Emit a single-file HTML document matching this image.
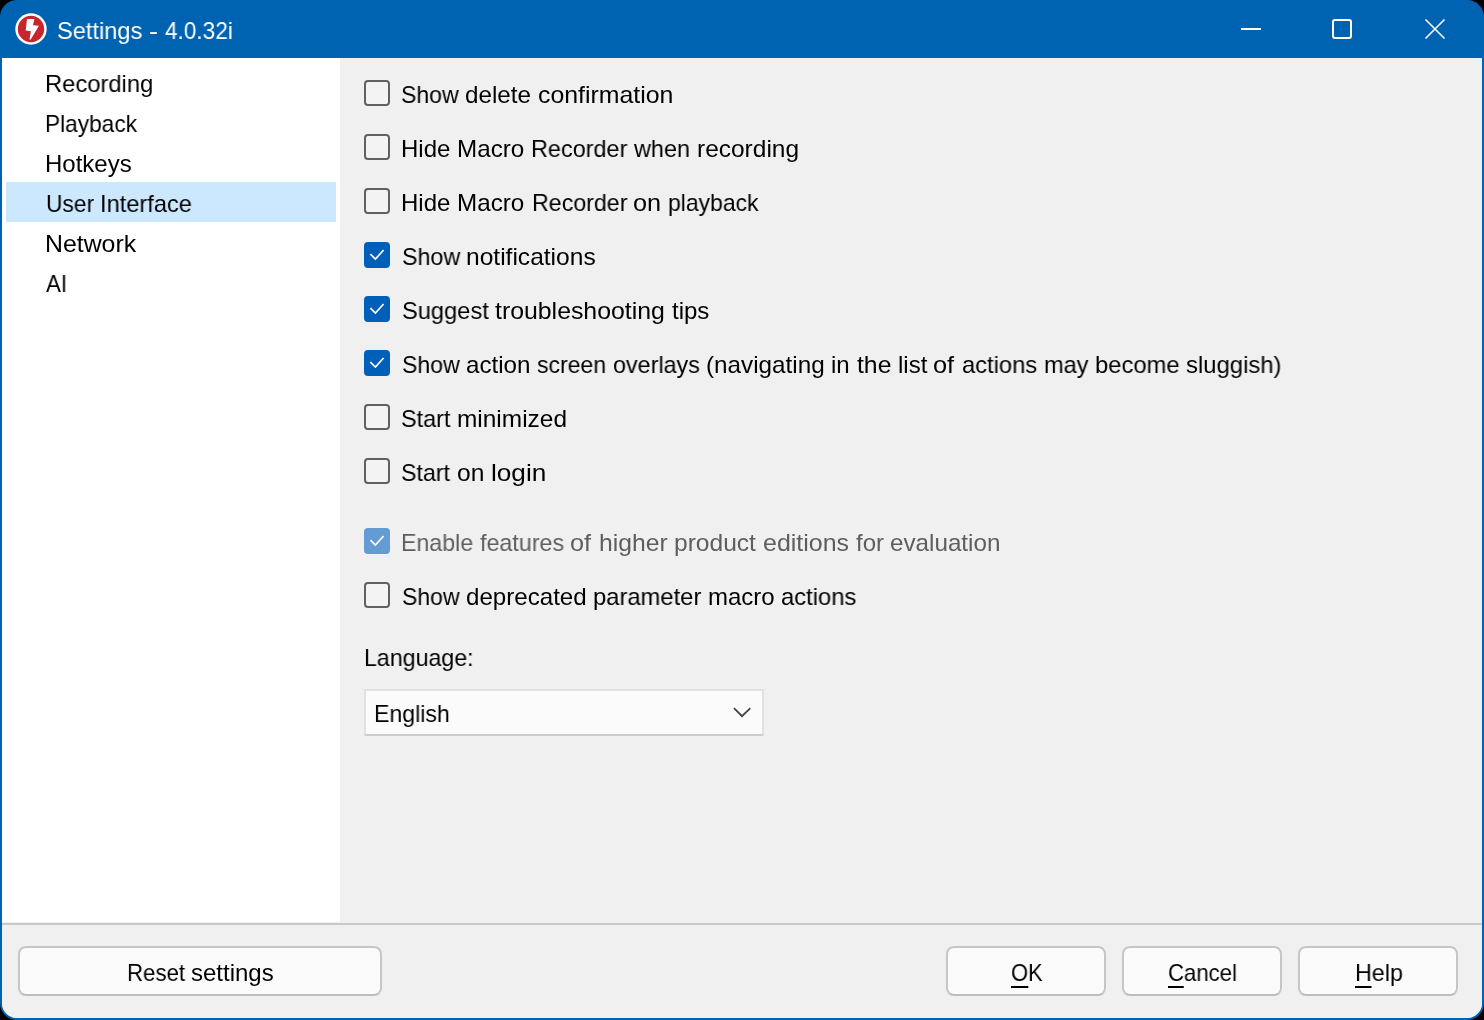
<!DOCTYPE html>
<html><head><meta charset="utf-8">
<style>
html,body{margin:0;padding:0;}
body{width:1484px;height:1020px;background:#000;overflow:hidden;position:relative;font-family:"Liberation Sans",sans-serif;}
.win{position:absolute;left:0;top:0;width:1484px;height:1020px;border-radius:17px;background:#0063B1;overflow:hidden;}
.t{position:absolute;font-size:24px;line-height:24px;white-space:nowrap;color:#000;transform-origin:0 0;will-change:transform;}
.left{position:absolute;left:2px;top:58px;width:338px;height:864px;background:#fff;}
.content{position:absolute;left:2px;top:58px;width:1480px;height:960px;background:#F0F0F0;border-radius:0 0 15px 15px;}
.sep{position:absolute;left:2px;top:923px;width:1480px;height:2px;background:#C9C9C9;}
.footer{position:absolute;left:2px;top:925px;width:1480px;height:93px;background:#F0F0F0;border-radius:0 0 15px 15px;}
.sel{position:absolute;left:6px;top:182px;width:330px;height:40px;background:#CCE8FF;}
.cb{position:absolute;left:364px;width:22px;height:22px;border:2px solid #606060;border-radius:4px;background:#F3F3F3;}
.cb.on{border-color:#005FB8;background:#005FB8;}
.cb.dis{border-color:#639BD3;background:#639BD3;}
.cb svg{position:absolute;left:-2px;top:-2px;}
.btn{position:absolute;top:946px;height:46px;border:2px solid #C6C6C6;border-bottom-color:#BEBEBE;border-radius:8px;background:#FBFBFB;}
.combo{position:absolute;left:364px;top:689px;width:396px;height:43px;border:2px solid #E2E2E2;border-bottom-color:#CDCDCD;background:#FBFBFB;}
u{text-decoration:none;border-bottom:2px solid #000;}
</style></head><body>
<div class="win">
<svg style="position:absolute;left:0;top:0" width="60" height="58">
<circle cx="31" cy="29" r="15.7" fill="#fff"/>
<circle cx="31" cy="29" r="13.2" fill="#C9252C"/>
<path d="M27 19.1 L34.4 19.1 L33 25.3 L38.9 25.8 L30.6 39.8 L29.5 39.3 L30.9 31.2 L25.7 30.6 Z" fill="#fff"/>
</svg>
<div class="t" style="left:56.8px;top:19px;transform:scaleX(0.984);color:#fff">Settings</div>
<div class="t" style="left:148.6px;top:19px;transform:scaleX(1.134);color:#fff">-</div>
<div class="t" style="left:165.2px;top:19px;transform:scaleX(0.941);color:#fff">4.0.32i</div>
<div style="position:absolute;left:1241px;top:28px;width:20px;height:2px;background:#fff"></div>
<div style="position:absolute;left:1332px;top:19px;width:16px;height:16px;border:2px solid #fff;border-radius:3px"></div>
<svg style="position:absolute;left:1420px;top:14px" width="30" height="30"><path d="M5.5 5.5 L24.5 24.5 M24.5 5.5 L5.5 24.5" stroke="#fff" stroke-width="1.6" fill="none"/></svg>
<div class="content"></div>
<div class="left"></div>
<div class="sel"></div>
<div class="t" style="left:45.3px;top:72px;transform:scaleX(0.99)">Recording</div>
<div class="t" style="left:45.1px;top:112px;transform:scaleX(0.944)">Playback</div>
<div class="t" style="left:45.0px;top:152px;transform:scaleX(0.995)">Hotkeys</div>
<div class="t" style="left:45.6px;top:192px;transform:scaleX(0.950)">User</div>
<div class="t" style="left:100.0px;top:192px;transform:scaleX(0.984)">Interface</div>
<div class="t" style="left:44.9px;top:232px;transform:scaleX(1.035)">Network</div>
<div class="t" style="left:46.2px;top:272px;transform:scaleX(0.929)">AI</div>
<div class="cb" style="top:80px"></div>
<div class="t" style="left:401.3px;top:83px;transform:scaleX(0.961)">Show</div>
<div class="t" style="left:465.4px;top:83px;transform:scaleX(1.009)">delete</div>
<div class="t" style="left:538.1px;top:83px;transform:scaleX(1.035)">confirmation</div>
<div class="cb" style="top:134px"></div>
<div class="t" style="left:401.3px;top:137px;transform:scaleX(1.001)">Hide</div>
<div class="t" style="left:457.4px;top:137px;transform:scaleX(1.009)">Macro</div>
<div class="t" style="left:531.4px;top:137px;transform:scaleX(0.976)">Recorder</div>
<div class="t" style="left:634.3px;top:137px;transform:scaleX(0.976)">when</div>
<div class="t" style="left:696.8px;top:137px;transform:scaleX(1.020)">recording</div>
<div class="cb" style="top:188px"></div>
<div class="t" style="left:401.3px;top:191px;transform:scaleX(1.001)">Hide</div>
<div class="t" style="left:457.4px;top:191px;transform:scaleX(1.009)">Macro</div>
<div class="t" style="left:531.5px;top:191px;transform:scaleX(0.967)">Recorder</div>
<div class="t" style="left:633.2px;top:191px;transform:scaleX(1.052)">on</div>
<div class="t" style="left:668.4px;top:191px;transform:scaleX(0.955)">playback</div>
<div class="cb on" style="top:242px"><svg width="26" height="26"><path d="M6.4 12.1 L11.4 17.1 L19.6 8" stroke="#fff" stroke-width="1.7" fill="none"/></svg></div>
<div class="t" style="left:401.6px;top:245px;transform:scaleX(0.970)">Show</div>
<div class="t" style="left:466.3px;top:245px;transform:scaleX(1.023)">notifications</div>
<div class="cb on" style="top:296px"><svg width="26" height="26"><path d="M6.4 12.1 L11.4 17.1 L19.6 8" stroke="#fff" stroke-width="1.7" fill="none"/></svg></div>
<div class="t" style="left:401.6px;top:299px;transform:scaleX(0.985)">Suggest</div>
<div class="t" style="left:494.9px;top:299px;transform:scaleX(1.035)">troubleshooting</div>
<div class="t" style="left:671.7px;top:299px;transform:scaleX(0.992)">tips</div>
<div class="cb on" style="top:350px"><svg width="26" height="26"><path d="M6.4 12.1 L11.4 17.1 L19.6 8" stroke="#fff" stroke-width="1.7" fill="none"/></svg></div>
<div class="t" style="left:401.6px;top:353px;transform:scaleX(0.962)">Show</div>
<div class="t" style="left:465.8px;top:353px;transform:scaleX(1.007)">action</div>
<div class="t" style="left:537.0px;top:353px;transform:scaleX(0.959)">screen</div>
<div class="t" style="left:612.5px;top:353px;transform:scaleX(0.973)">overlays</div>
<div class="t" style="left:706.0px;top:353px;transform:scaleX(1.011)">(navigating</div>
<div class="t" style="left:831.4px;top:353px;transform:scaleX(0.998)">in</div>
<div class="t" style="left:856.7px;top:353px;transform:scaleX(1.031)">the</div>
<div class="t" style="left:898.0px;top:353px;transform:scaleX(0.986)">list</div>
<div class="t" style="left:933.4px;top:353px;transform:scaleX(1.057)">of</div>
<div class="t" style="left:961.7px;top:353px;transform:scaleX(0.989)">actions</div>
<div class="t" style="left:1043.5px;top:353px;transform:scaleX(0.982)">may</div>
<div class="t" style="left:1094.6px;top:353px;transform:scaleX(0.991)">become</div>
<div class="t" style="left:1185.8px;top:353px;transform:scaleX(0.994)">sluggish)</div>
<div class="cb" style="top:404px"></div>
<div class="t" style="left:401.3px;top:407px;transform:scaleX(0.975)">Start</div>
<div class="t" style="left:457.2px;top:407px;transform:scaleX(1.018)">minimized</div>
<div class="cb" style="top:458px"></div>
<div class="t" style="left:401.3px;top:461px;transform:scaleX(0.966)">Start</div>
<div class="t" style="left:456.7px;top:461px;transform:scaleX(1.025)">on</div>
<div class="t" style="left:490.8px;top:461px;transform:scaleX(1.090)">login</div>
<div class="cb dis" style="top:528px"><svg width="26" height="26"><path d="M6.4 12.1 L11.4 17.1 L19.6 8" stroke="#fff" stroke-width="1.7" fill="none"/></svg></div>
<div class="t" style="left:401.3px;top:531px;transform:scaleX(0.965);color:#5E5E5E">Enable</div>
<div class="t" style="left:479.8px;top:531px;transform:scaleX(0.970);color:#5E5E5E">features</div>
<div class="t" style="left:570.3px;top:531px;transform:scaleX(1.053);color:#5E5E5E">of</div>
<div class="t" style="left:598.5px;top:531px;transform:scaleX(1.029);color:#5E5E5E">higher</div>
<div class="t" style="left:674.0px;top:531px;transform:scaleX(1.023);color:#5E5E5E">product</div>
<div class="t" style="left:762.7px;top:531px;transform:scaleX(1.040);color:#5E5E5E">editions</div>
<div class="t" style="left:855.6px;top:531px;transform:scaleX(0.995);color:#5E5E5E">for</div>
<div class="t" style="left:890.1px;top:531px;transform:scaleX(1.009);color:#5E5E5E">evaluation</div>
<div class="cb" style="top:582px"></div>
<div class="t" style="left:401.5px;top:585px;transform:scaleX(0.959)">Show</div>
<div class="t" style="left:465.5px;top:585px;transform:scaleX(1.005)">deprecated</div>
<div class="t" style="left:592.9px;top:585px;transform:scaleX(0.990)">parameter</div>
<div class="t" style="left:707.8px;top:585px;transform:scaleX(0.994)">macro</div>
<div class="t" style="left:780.7px;top:585px;transform:scaleX(0.991)">actions</div>
<div class="t" style="left:363.8px;top:646px;transform:scaleX(0.966)">Language:</div>
<div class="combo"></div>
<div class="t" style="left:374.0px;top:702px;transform:scaleX(0.964)">English</div>
<svg style="position:absolute;left:730px;top:700px" width="24" height="24"><path d="M4 8.2 L12 16.2 L20.3 8.2" stroke="#404040" stroke-width="1.7" fill="none"/></svg>
<div class="sep"></div>
<div class="footer"></div>
<div class="btn" style="left:18px;width:360px"></div>
<div class="t" style="left:126.5px;top:961px;transform:scaleX(0.926)">Reset</div>
<div class="t" style="left:190.7px;top:961px;transform:scaleX(0.999)">settings</div>
<div class="btn" style="left:946px;width:156px"></div>
<div class="t" style="left:1010.8px;top:961px;transform:scaleX(0.912)"><u>O</u>K</div>
<div class="btn" style="left:1122px;width:156px"></div>
<div class="t" style="left:1167.6px;top:961px;transform:scaleX(0.922)"><u>C</u>ancel</div>
<div class="btn" style="left:1298px;width:156px"></div>
<div class="t" style="left:1354.6px;top:961px;transform:scaleX(0.971)"><u>H</u>elp</div>
</div>
</body></html>
